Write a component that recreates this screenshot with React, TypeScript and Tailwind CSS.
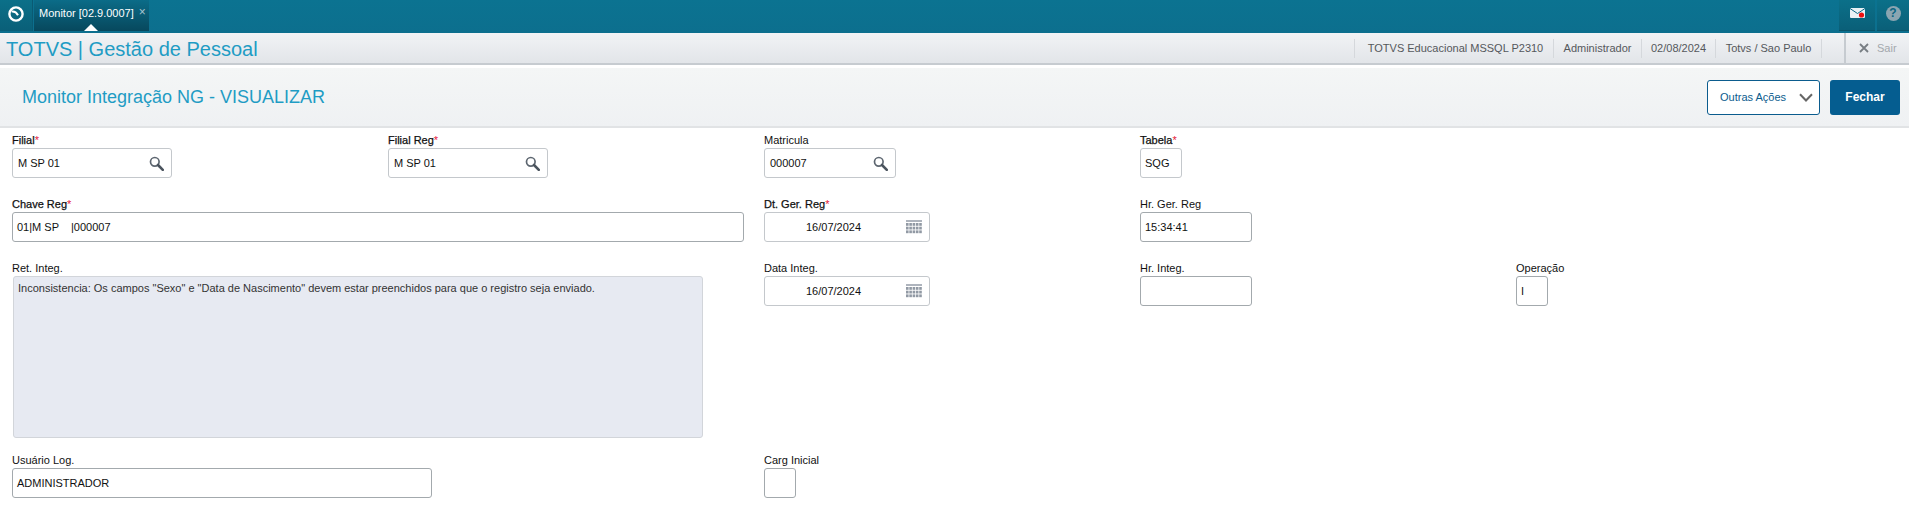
import { ReactNode } from "react";

const Search = () => (
  <svg width="15" height="15" viewBox="0 0 15 15" fill="none" className="shrink-0">
    <circle cx="5.8" cy="5.8" r="4.3" stroke="#5d6670" strokeWidth="1.7" />
    <path d="M9 9l4.8 4.8" stroke="#4b545e" strokeWidth="2.6" strokeLinecap="round" />
  </svg>
);

const CalendarGrid = () => (
  <svg width="16" height="14" viewBox="0 0 16 14" className="shrink-0">
    <rect x="0" y="0" width="16" height="2" fill="#aeb4bd" />
    {[3, 6.7, 10.4].map((y) =>
      [0, 3.3, 6.6, 9.9, 13.2].map((x) => (
        <rect key={`${x}-${y}`} x={x} y={y} width="2.6" height="2.8" fill="#9199a4" />
      ))
    )}
  </svg>
);

const Label = ({ text, required }: { text: string; required?: boolean }) => (
  <div className="flex h-[17px] items-end pb-[1px] text-[11px] leading-[13px] text-[#111]">
    <span className={required ? "[-webkit-text-stroke:0.25px_#111]" : ""}>{text}</span>
    {required && <span className="text-[#e5203a]">*</span>}
  </div>
);

const Field = ({
  label,
  required,
  value,
  width,
  icon,
  center,
  dark,
}: {
  label: string;
  required?: boolean;
  value?: string;
  width: string;
  icon?: ReactNode;
  center?: boolean;
  dark?: boolean;
}) => (
  <div>
    <Label text={label} required={required} />
    <div
      className={`flex h-[30px] items-center rounded-[3px] border bg-white pr-[7px] text-[11px] text-[#111] ${width} ${
        dark ? "border-[#a3a9ad]" : "border-[#c4c8cc]"
      } ${icon && !center ? "pl-[5px]" : "pl-[4px]"}`}
    >
      <span className={`flex-1 whitespace-pre ${center ? "pl-[37px]" : ""}`}>{value}</span>
      {icon}
    </div>
  </div>
);

const infoItems = [
  { text: "TOTVS Educacional MSSQL P2310", width: "w-[199px] pl-[3px]" },
  { text: "Administrador", width: "w-[88px]" },
  { text: "02/08/2024", width: "w-[74px]" },
  { text: "Totvs / Sao Paulo", width: "w-[106px]" },
];

export default function App() {
  return (
    <div className="flex h-[510px] w-[1909px] flex-col overflow-hidden bg-white font-['Liberation_Sans',Arial,sans-serif]">
      {/* Top bar */}
      <div className="flex h-[33px] shrink-0 items-start bg-gradient-to-b from-[#0b7391] to-[#0c6f8e]">
        <div className="flex h-[31px] w-[33px] items-center justify-center border-r border-[#0a5a73] bg-gradient-to-b from-[#0b7089] to-[#0a5f78]">
          <svg width="18" height="18" viewBox="0 0 18 18" fill="none" className="-mt-[3px]">
            <circle cx="9" cy="9" r="6.6" stroke="#fff" strokeWidth="2.4" />
            <path d="M4.6 6.6C7 6.2 9.6 7.6 11 10.2" stroke="#fff" strokeWidth="2" />
          </svg>
        </div>
        <div className="relative ml-px flex h-[31px] w-[115px] items-start whitespace-nowrap bg-gradient-to-b from-[#0b6c88] to-[#07485d] pl-[5px] pt-[7px] text-[11px] leading-[13px] text-white">
          <span>Monitor [02.9.0007]</span>
          <span className="ml-[5px] text-[12px] leading-[10px] text-[#a9c4cf]">×</span>
          <div className="absolute bottom-0 left-[50px] h-0 w-0 border-x-[7px] border-b-[7px] border-x-transparent border-b-white" />
        </div>
        <div className="flex-1" />
        <div className="flex h-[31px] w-[36px] items-center justify-center border-b border-[#0a5468] bg-gradient-to-b from-[#0b7089] to-[#0a5f78] pb-[4px]">
          <svg width="15" height="12" viewBox="0 0 15 12">
            <rect y="1" width="15" height="10" fill="#e8f1f5" rx="1" />
            <path d="M0 1.5l7.5 5 7.5-5" stroke="#0b6683" strokeWidth="1" fill="none" />
            <circle cx="11.5" cy="8" r="2.6" fill="#f01010" />
          </svg>
        </div>
        <div className="ml-[2px] flex h-[31px] w-[32px] items-center justify-center border-b border-[#0a5468] bg-gradient-to-b from-[#0b7089] to-[#0a5f78] pb-[4px]">
          <div className="flex h-[15px] w-[15px] items-center justify-center rounded-full bg-[#8aa5b1] text-[12px] font-bold leading-none text-[#0b6683]">
            ?
          </div>
        </div>
      </div>

      {/* App header */}
      <div className="flex h-[32px] shrink-0 items-center border-b-2 border-[#c6cbd0] bg-gradient-to-b from-[#f1f3f5] to-[#e2e5e9]">
        <div className="flex-1 pl-[6px] pt-[1px] text-[20px] leading-[28px] text-[#1f9cc4]">TOTVS | Gestão de Pessoal</div>
        <div className="flex h-[19px] items-center border-l border-[#d5d8dc]">
          {infoItems.map((item) => (
            <div
              key={item.text}
              className={`flex h-full items-center justify-center border-r border-[#d5d8dc] text-[11px] text-[#55585c] ${item.width}`}
            >
              {item.text}
            </div>
          ))}
        </div>
        <div className="ml-[22px] flex h-[30px] w-[65px] items-center border-l-2 border-[#c6cbd0] pl-[13px] text-[11px] text-[#a3a8ad]">
          <svg width="10" height="10" viewBox="0 0 10 10" className="mr-[8px]">
            <path d="M1 1l8 8M9 1l-8 8" stroke="#777d83" strokeWidth="1.8" />
          </svg>
          Sair
        </div>
      </div>

      {/* Page title */}
      <div className="mt-[3px] flex h-[60px] shrink-0 items-center justify-between border-b-2 border-[#e1e3e5] bg-gradient-to-b from-[#f4f6f6] to-[#eff1f3] pl-[22px] pr-[9px]">
        <div className="text-[18px] text-[#1f9cc4]">Monitor Integração NG - VISUALIZAR</div>
        <div className="flex gap-[10px]">
          <div className="flex h-[35px] w-[113px] items-center justify-between rounded-[3px] border border-[#0b5c8e] bg-white pl-[12px] pr-[6px] text-[11px] text-[#0b5c8e]">
            Outras Ações
            <svg width="14" height="9" viewBox="0 0 14 9" fill="none">
              <path d="M1 1.2L7 7.5l6-6.3" stroke="#666" strokeWidth="2" />
            </svg>
          </div>
          <div className="flex h-[35px] w-[70px] items-center justify-center rounded-[3px] bg-[#055d90] text-[12px] font-bold text-white">
            Fechar
          </div>
        </div>
      </div>

      {/* Form */}
      <div className="grid grid-cols-[376px_376px_376px_376px_1fr] grid-rows-[64px_64px_192px_64px] pl-[12px] pt-[3px]">
        <Field label="Filial" required value="M SP 01" width="w-[160px]" icon={<Search />} />
        <Field label="Filial Reg" required value="M SP 01" width="w-[160px]" icon={<Search />} />
        <Field label="Matricula" value="000007" width="w-[132px]" icon={<Search />} />
        <div className="col-span-2">
          <Field label="Tabela" required value="SQG" width="w-[42px]" />
        </div>

        <div className="col-span-2">
          <Field label="Chave Reg" required value="01|M SP    |000007" width="w-[732px]" dark />
        </div>
        <Field label="Dt. Ger. Reg" required value="16/07/2024" width="w-[166px]" icon={<CalendarGrid />} center />
        <div className="col-span-2">
          <Field label="Hr. Ger. Reg" value="15:34:41" width="w-[112px]" dark />
        </div>

        <div className="col-span-2">
          <Label text="Ret. Integ." />
          <div className="ml-px h-[162px] w-[690px] rounded-[3px] border border-[#d2d5da] bg-[#e7eaf2] px-[4px] py-[4px] text-[11px] leading-[14px] text-[#333]">
            Inconsistencia: Os campos "Sexo" e "Data de Nascimento" devem estar preenchidos para que o registro seja enviado.
          </div>
        </div>
        <Field label="Data Integ." value="16/07/2024" width="w-[166px]" icon={<CalendarGrid />} center />
        <Field label="Hr. Integ." width="w-[112px]" dark />
        <Field label="Operação" value="I" width="w-[32px]" dark />

        <div className="col-span-2">
          <Field label="Usuário Log." value="ADMINISTRADOR" width="w-[420px]" dark />
        </div>
        <Field label="Carg Inicial" width="w-[32px]" dark />
      </div>
    </div>
  );
}
